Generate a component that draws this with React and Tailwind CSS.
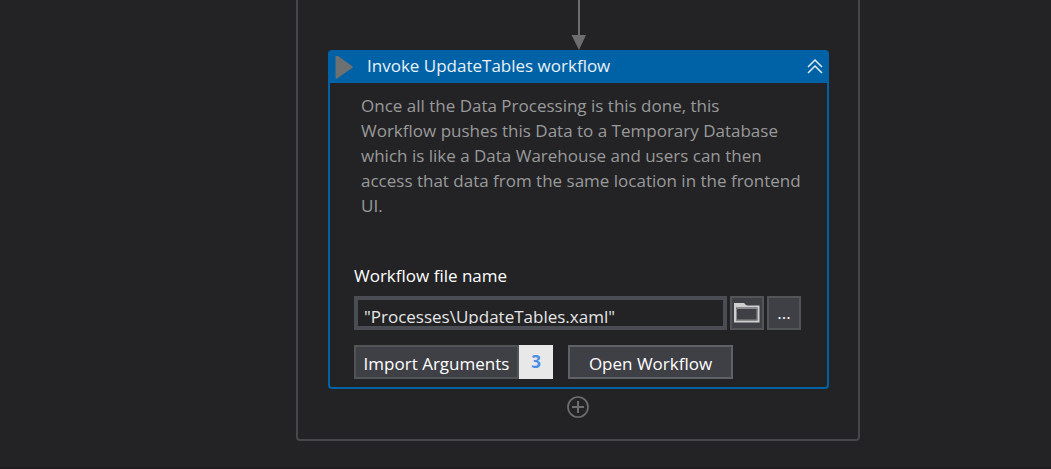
function Connector() {
  return (
    <svg className="h-[50px] w-4 shrink-0" viewBox="0 0 16 50" aria-hidden="true">
      <path d="M8 0V36" stroke="#6d6d6d" strokeWidth="2" />
      <path d="M0.5 35h14.5L8 50z" fill="#6d6d6d" />
    </svg>
  );
}

function FolderIcon() {
  return (
    <svg width="26" height="20" viewBox="0 0 26 20" fill="none" aria-hidden="true">
      <path d="M0 0h10l3 3H0z" fill="#cfcfcf" />
      <path d="M1 2V18.5H24.5V3.5H1" stroke="#cfcfcf" strokeWidth="2" />
      <path d="M2.5 5.5H23V17H2.5z" stroke="#8b8c8b" strokeWidth="1" />
    </svg>
  );
}

function ActivityCard() {
  return (
    <section className="flex w-full flex-col rounded border-2 border-[#0062a6] bg-[#232325]">
      <header className="flex h-[31px] items-center bg-[#0062a6] pr-1 pl-[5px]">
        <svg width="18" height="24" viewBox="0 0 18 24" aria-hidden="true">
          <path d="M1.5 0.2L16.8 11L1.5 21.8z" fill="#6f7071" stroke="#6f7071" strokeWidth="2" strokeLinejoin="round" />
        </svg>
        <h1 className="ml-[14px] flex-1 pb-1 text-[17px] leading-[25px] text-[#e9f1f7]">Invoke UpdateTables workflow</h1>
        <button type="button" aria-label="Collapse" className="flex pb-1">
          <svg width="16" height="16" viewBox="0 0 16 16" fill="none" stroke="#e3eef6" strokeWidth="1.5" aria-hidden="true">
            <path d="M1 9L8 2L15 9M1 15L8 8L15 15" />
          </svg>
        </button>
      </header>
      <div className="px-6 pt-[10px] pb-2">
        <p className="pl-[7px] text-[17px] leading-[25px] text-[#999a9b]">
          Once all the Data Processing is this done, this
          <br />
          Workflow pushes this Data to a Temporary Database
          <br />
          which is like a Data Warehouse and users can then
          <br />
          access that data from the same location in the frontend
          <br />
          UI.
        </p>
        <label htmlFor="workflow-file" className="mt-[45px] block text-[17px] leading-[25px] text-white">
          Workflow file name
        </label>
        <div className="mt-2 flex gap-[3px]">
          <div className="h-[34px] min-w-0 flex-1 border-4 border-[#4b4d55] bg-[#232325] pb-[2px]">
            <div className="h-full overflow-hidden">
              <input
                id="workflow-file"
                type="text"
                defaultValue={'"Processes\\UpdateTables.xaml"'}
                className="block h-8 w-full bg-transparent px-[6px] text-[17px] leading-[25px] text-[#e6e6e6] outline-none"
              />
            </div>
          </div>
          <button type="button" aria-label="Browse" className="flex size-[34px] items-center justify-center border-2 border-[#535456] bg-[#3f4046]">
            <FolderIcon />
          </button>
          <button type="button" aria-label="More" className="mr-[2px] size-[34px] border-2 border-[#535456] bg-[#3f4046] text-[17px] leading-[30px] text-white">
            ...
          </button>
        </div>
        <div className="mt-[15px] flex">
          <button type="button" className="flex h-[34px] w-[199px] text-[17px] text-white">
            <span className="flex h-full flex-1 items-center justify-center border-2 border-[#535456] bg-[#3f4046] pt-[2px] leading-[25px]">Import Arguments</span>
            <span className="flex h-full w-[34px] items-center justify-center bg-[#e8e8e8] font-bold text-[#4a8fe7]">3</span>
          </button>
          <button type="button" className="ml-[15px] h-[34px] w-[165px] border-2 border-[#5f6068] bg-[#3f4046] pt-[2px] text-[17px] leading-[25px] text-white">
            Open Workflow
          </button>
        </div>
      </div>
    </section>
  );
}

export default function App() {
  return (
    <main className="flex min-h-screen justify-center border-b-2 border-[#1f1d20] bg-[#232325] pb-[26px] pl-[105px] font-['Open_Sans','Noto_Sans',sans-serif]">
      <div className="flex w-full max-w-[564px] flex-col items-center self-start rounded-b border-2 border-t-0 border-[#46474d] pr-[29px] pb-[21px] pl-[30px]">
        <Connector />
        <ActivityCard />
        <button type="button" aria-label="Add activity" className="mt-[7px] flex">
          <svg width="24" height="22" viewBox="0 0 24 22" fill="none" stroke="#6d6d6d" aria-hidden="true">
            <circle cx="11" cy="11" r="10" strokeWidth="1.7" />
            <path d="M11 5V17M5 11H17" strokeWidth="2" />
          </svg>
        </button>
      </div>
    </main>
  );
}
